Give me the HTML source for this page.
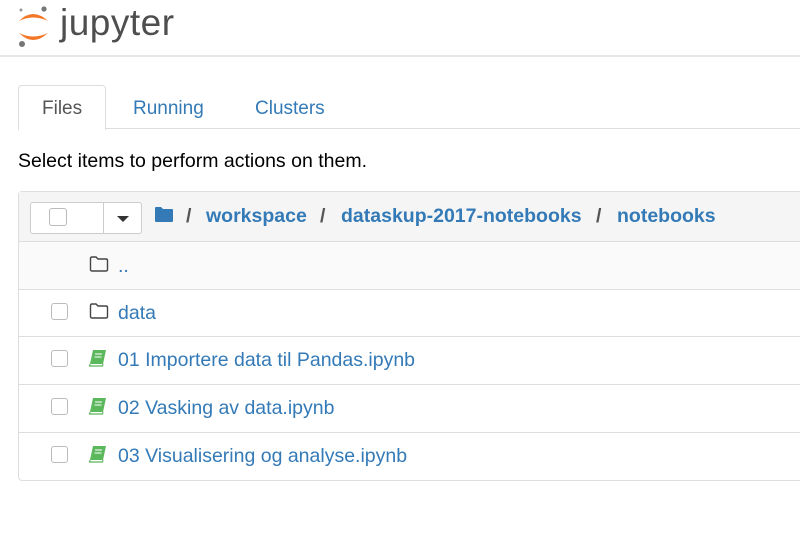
<!DOCTYPE html>
<html><head><style>
body{margin:0;width:800px;height:537px;overflow:hidden;background:#fff;font-family:"Liberation Sans",sans-serif;font-size:19.5px;color:#000;position:relative}
.a{position:absolute;white-space:nowrap}
.link{color:#337ab7}
.cb{position:absolute;width:15px;height:15px;border:1px solid #bbb;border-radius:3px;background:#fff}
.row{position:absolute;left:18px;width:790px;height:47px;border-top:1px solid #ddd}
</style></head><body>
<svg class="a" style="left:16px;top:4px" width="36" height="44" viewBox="0 0 36 44">
<path d="M3 17 Q17 3 32 17 Q17 10 3 17Z" fill="#f37726"/>
<path d="M3 29 Q17 43 32 29 Q17 36 3 29Z" fill="#f37726"/>
<circle cx="28" cy="5" r="2.6" fill="#767677"/>
<circle cx="6" cy="40" r="3" fill="#767677"/>
<circle cx="5" cy="6" r="1.5" fill="#989798"/>
</svg>
<div class="a" style="left:60px;top:2px;font-size:37px;color:#4e4e4e;letter-spacing:0.5px">jupyter</div>
<div class="a" style="left:0;top:55px;width:800px;height:2px;background:#e7e7e7"></div>
<div class="a" style="left:105px;top:128px;width:695px;height:1px;background:#ddd"></div>
<div class="a" style="left:18px;top:85px;width:86px;height:44px;border:1px solid #ddd;border-bottom:none;border-radius:4px 4px 0 0;background:#fff"></div>
<div class="a" style="left:42px;top:98px;color:#555;font-size:19px">Files</div>
<div class="a link" style="left:133px;top:98px;font-size:19px">Running</div>
<div class="a link" style="left:255px;top:98px;font-size:19px">Clusters</div>
<div class="a" style="left:18px;top:150px;font-size:19.5px">Select items to perform actions on them.</div>
<div class="a" style="left:18px;top:191px;width:790px;height:288px;border:1px solid #ddd;border-radius:4px"></div>
<div class="a" style="left:19px;top:192px;width:790px;height:49px;background:#f5f5f5"></div>
<div class="a" style="left:30px;top:202px;width:110px;height:30px;border:1px solid #ccc;background:#fff;border-radius:3px"></div>
<div class="a" style="left:103px;top:202px;width:1px;height:32px;background:#ccc"></div>
<div class="cb" style="left:49px;top:208px;width:16px;height:16px"></div>
<div class="a" style="left:117px;top:216px;border-left:6px solid transparent;border-right:6px solid transparent;border-top:6px solid #333"></div>
<svg class="a" style="left:154px;top:206px" width="20" height="17" viewBox="0 0 20 17"><path d="M1 2 Q1 1 2 1 H7 L9 3 H18 Q19 3 19 4 V15 Q19 16 18 16 H2 Q1 16 1 15Z" fill="#337ab7"/></svg>
<div class="a" style="left:186px;top:205px;font-weight:bold;color:#555">/</div>
<div class="a link" style="left:206px;top:205px;font-weight:bold">workspace</div>
<div class="a" style="left:320px;top:205px;font-weight:bold;color:#555">/</div>
<div class="a link" style="left:341px;top:205px;font-weight:bold">dataskup-2017-notebooks</div>
<div class="a" style="left:596px;top:205px;font-weight:bold;color:#555">/</div>
<div class="a link" style="left:617px;top:205px;font-weight:bold">notebooks</div>
<div class="row" style="top:241px;background:#fafafa;left:19px"></div>
<div class="row" style="top:289px"></div>
<div class="row" style="top:336px"></div>
<div class="row" style="top:384px"></div>
<div class="row" style="top:432px;height:46px"></div>
<svg class="a" style="left:89px;top:256px" width="20" height="16" viewBox="0 0 20 16"><path d="M1.5 2.5 Q1.5 1 3 1 H7 L9 3 H17 Q18.5 3 18.5 4.5 V13.5 Q18.5 15 17 15 H3 Q1.5 15 1.5 13.5Z" fill="none" stroke="#444" stroke-width="1.4"/></svg>
<div class="a link" style="left:118px;top:255px">..</div>
<div class="cb" style="left:51px;top:303px"></div>
<svg class="a" style="left:89px;top:303px" width="20" height="16" viewBox="0 0 20 16"><path d="M1.5 2.5 Q1.5 1 3 1 H7 L9 3 H17 Q18.5 3 18.5 4.5 V13.5 Q18.5 15 17 15 H3 Q1.5 15 1.5 13.5Z" fill="none" stroke="#444" stroke-width="1.4"/></svg>
<div class="a link" style="left:118px;top:302px">data</div>
<div class="cb" style="left:51px;top:350px"></div>
<svg class="a" style="left:89px;top:349px" width="18" height="18" viewBox="0 0 18 18"><path d="M4 1 H17 L14 15 H1Z" fill="#5cb85c"/><path d="M1 15 L0.5 17 H13.5 L14 15" fill="none" stroke="#5cb85c" stroke-width="1.2"/><path d="M6 5 H13 M5.5 8 H12.5" stroke="#fff" stroke-width="1"/></svg>
<div class="a link" style="left:118px;top:349px">01 Importere data til Pandas.ipynb</div>
<div class="cb" style="left:51px;top:398px"></div>
<svg class="a" style="left:89px;top:397px" width="18" height="18" viewBox="0 0 18 18"><path d="M4 1 H17 L14 15 H1Z" fill="#5cb85c"/><path d="M1 15 L0.5 17 H13.5 L14 15" fill="none" stroke="#5cb85c" stroke-width="1.2"/><path d="M6 5 H13 M5.5 8 H12.5" stroke="#fff" stroke-width="1"/></svg>
<div class="a link" style="left:118px;top:397px">02 Vasking av data.ipynb</div>
<div class="cb" style="left:51px;top:446px"></div>
<svg class="a" style="left:89px;top:445px" width="18" height="18" viewBox="0 0 18 18"><path d="M4 1 H17 L14 15 H1Z" fill="#5cb85c"/><path d="M1 15 L0.5 17 H13.5 L14 15" fill="none" stroke="#5cb85c" stroke-width="1.2"/><path d="M6 5 H13 M5.5 8 H12.5" stroke="#fff" stroke-width="1"/></svg>
<div class="a link" style="left:118px;top:445px">03 Visualisering og analyse.ipynb</div>
</body></html>
